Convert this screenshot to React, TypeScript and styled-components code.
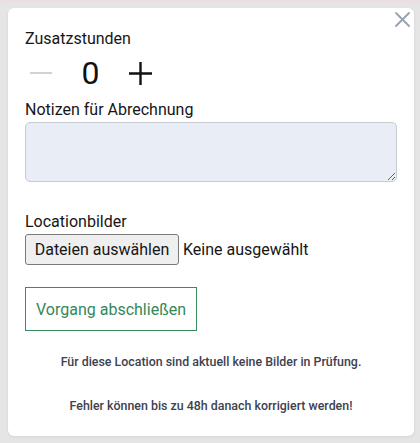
import styled, { createGlobalStyle } from "styled-components"

const GlobalStyle = createGlobalStyle`
  html, body {
    margin: 0;
    padding: 0;
  }
  body {
    background: linear-gradient(#eadfe3 0 3px, #e5e5e5 3px);
    font-family: Roboto, "Noto Sans", sans-serif;
    color: #161616;
  }
  #root {
    padding: 8px 6px 7px 8px;
  }
`

export default function App() {
  return (
    <>
      <GlobalStyle />
      <Card>
        <CloseButton type="button" aria-label="Schließen">
          <svg width="15" height="15" viewBox="0 0 15 15">
            <path d="M1 1 L14 14 M14 1 L1 14" stroke="currentColor" strokeWidth="1.8" strokeLinecap="round" />
          </svg>
        </CloseButton>

        <Label>Zusatzstunden</Label>
        <Stepper>
          <StepButton type="button" aria-label="Weniger" $disabled>
            <svg width="22" height="4" viewBox="0 0 22 4">
              <path d="M0 2 H22" stroke="currentColor" strokeWidth="2" />
            </svg>
          </StepButton>
          <Count>0</Count>
          <StepButton type="button" aria-label="Mehr">
            <svg width="23" height="23" viewBox="0 0 23 23">
              <path d="M0 11.5 H23 M11.5 0 V23" stroke="currentColor" strokeWidth="2.4" />
            </svg>
          </StepButton>
        </Stepper>

        <Label $top={9}>Notizen für Abrechnung</Label>
        <Notes />

        <Label $top={28}>Locationbilder</Label>
        <FileRow>
          <FileButton type="button">Dateien auswählen</FileButton>
          <span>Keine ausgewählt</span>
        </FileRow>

        <SubmitButton type="button">Vorgang abschließen</SubmitButton>

        <Hint $top={22}>Für diese Location sind aktuell keine Bilder in Prüfung.</Hint>
        <Hint $top={26}>Fehler können bis zu 48h danach korrigiert werden!</Hint>
      </Card>
    </>
  )
}

const Card = styled.div`
  position: relative;
  box-sizing: border-box;
  width: 406px;
  height: 428px;
  padding: 19px 17px 21px 17px;
  display: flex;
  flex-direction: column;
  align-items: flex-start;
  background: #ffffff;
  border-radius: 6px;
  box-shadow: 0 1px 3px rgba(0, 0, 0, 0.08);
`

const CloseButton = styled.button`
  position: absolute;
  top: 4px;
  right: 4px;
  padding: 0;
  border: none;
  background: transparent;
  color: #98a1b0;
  cursor: pointer;
  display: flex;
`

const Label = styled.div<{ $top?: number }>`
  margin-top: ${({ $top }) => $top ?? 0}px;
  font-size: 16px;
  line-height: 24px;
  color: #161616;
`

const Stepper = styled.div`
  margin-top: 6px;
  display: flex;
  align-items: center;
  height: 32px;
`

const StepButton = styled.button<{ $disabled?: boolean }>`
  width: 32px;
  height: 32px;
  padding: 0;
  border: none;
  background: transparent;
  display: flex;
  align-items: center;
  justify-content: center;
  color: ${({ $disabled }) => ($disabled ? "#d2d2d2" : "#111111")};
  cursor: ${({ $disabled }) => ($disabled ? "default" : "pointer")};
`

const Count = styled.span`
  width: 67px;
  text-align: center;
  font-size: 32px;
  line-height: 32px;
  color: #111111;
`

const Notes = styled.textarea`
  box-sizing: border-box;
  width: 372px;
  height: 60px;
  margin: 0;
  padding: 6px 8px;
  background: #e8edf6;
  border: 1px solid #c6cbd4;
  border-radius: 5px;
  font-family: inherit;
  font-size: 14px;
  outline: none;
`

const FileRow = styled.div`
  display: flex;
  align-items: center;
  gap: 4px;
  font-size: 16px;
  color: #161616;
`

const FileButton = styled.button`
  box-sizing: border-box;
  width: 154px;
  height: 31px;
  padding: 0 6px;
  background: #efefef;
  border: 1px solid #7a7a7a;
  border-radius: 3px;
  font-family: inherit;
  font-size: 16px;
  color: #161616;
`

const SubmitButton = styled.button`
  box-sizing: border-box;
  margin-top: 22px;
  width: 172px;
  height: 44px;
  padding: 0 10px;
  background: #ffffff;
  border: 1px solid #3a8c5e;
  border-radius: 0;
  font-family: inherit;
  font-size: 16px;
  color: #35875a;
  cursor: pointer;
`

const Hint = styled.p<{ $top: number }>`
  align-self: stretch;
  margin: ${({ $top }) => $top}px 0 0;
  text-align: center;
  font-size: 12.4px;
  line-height: 18px;
  font-weight: 500;
  color: #3d4250;
`
